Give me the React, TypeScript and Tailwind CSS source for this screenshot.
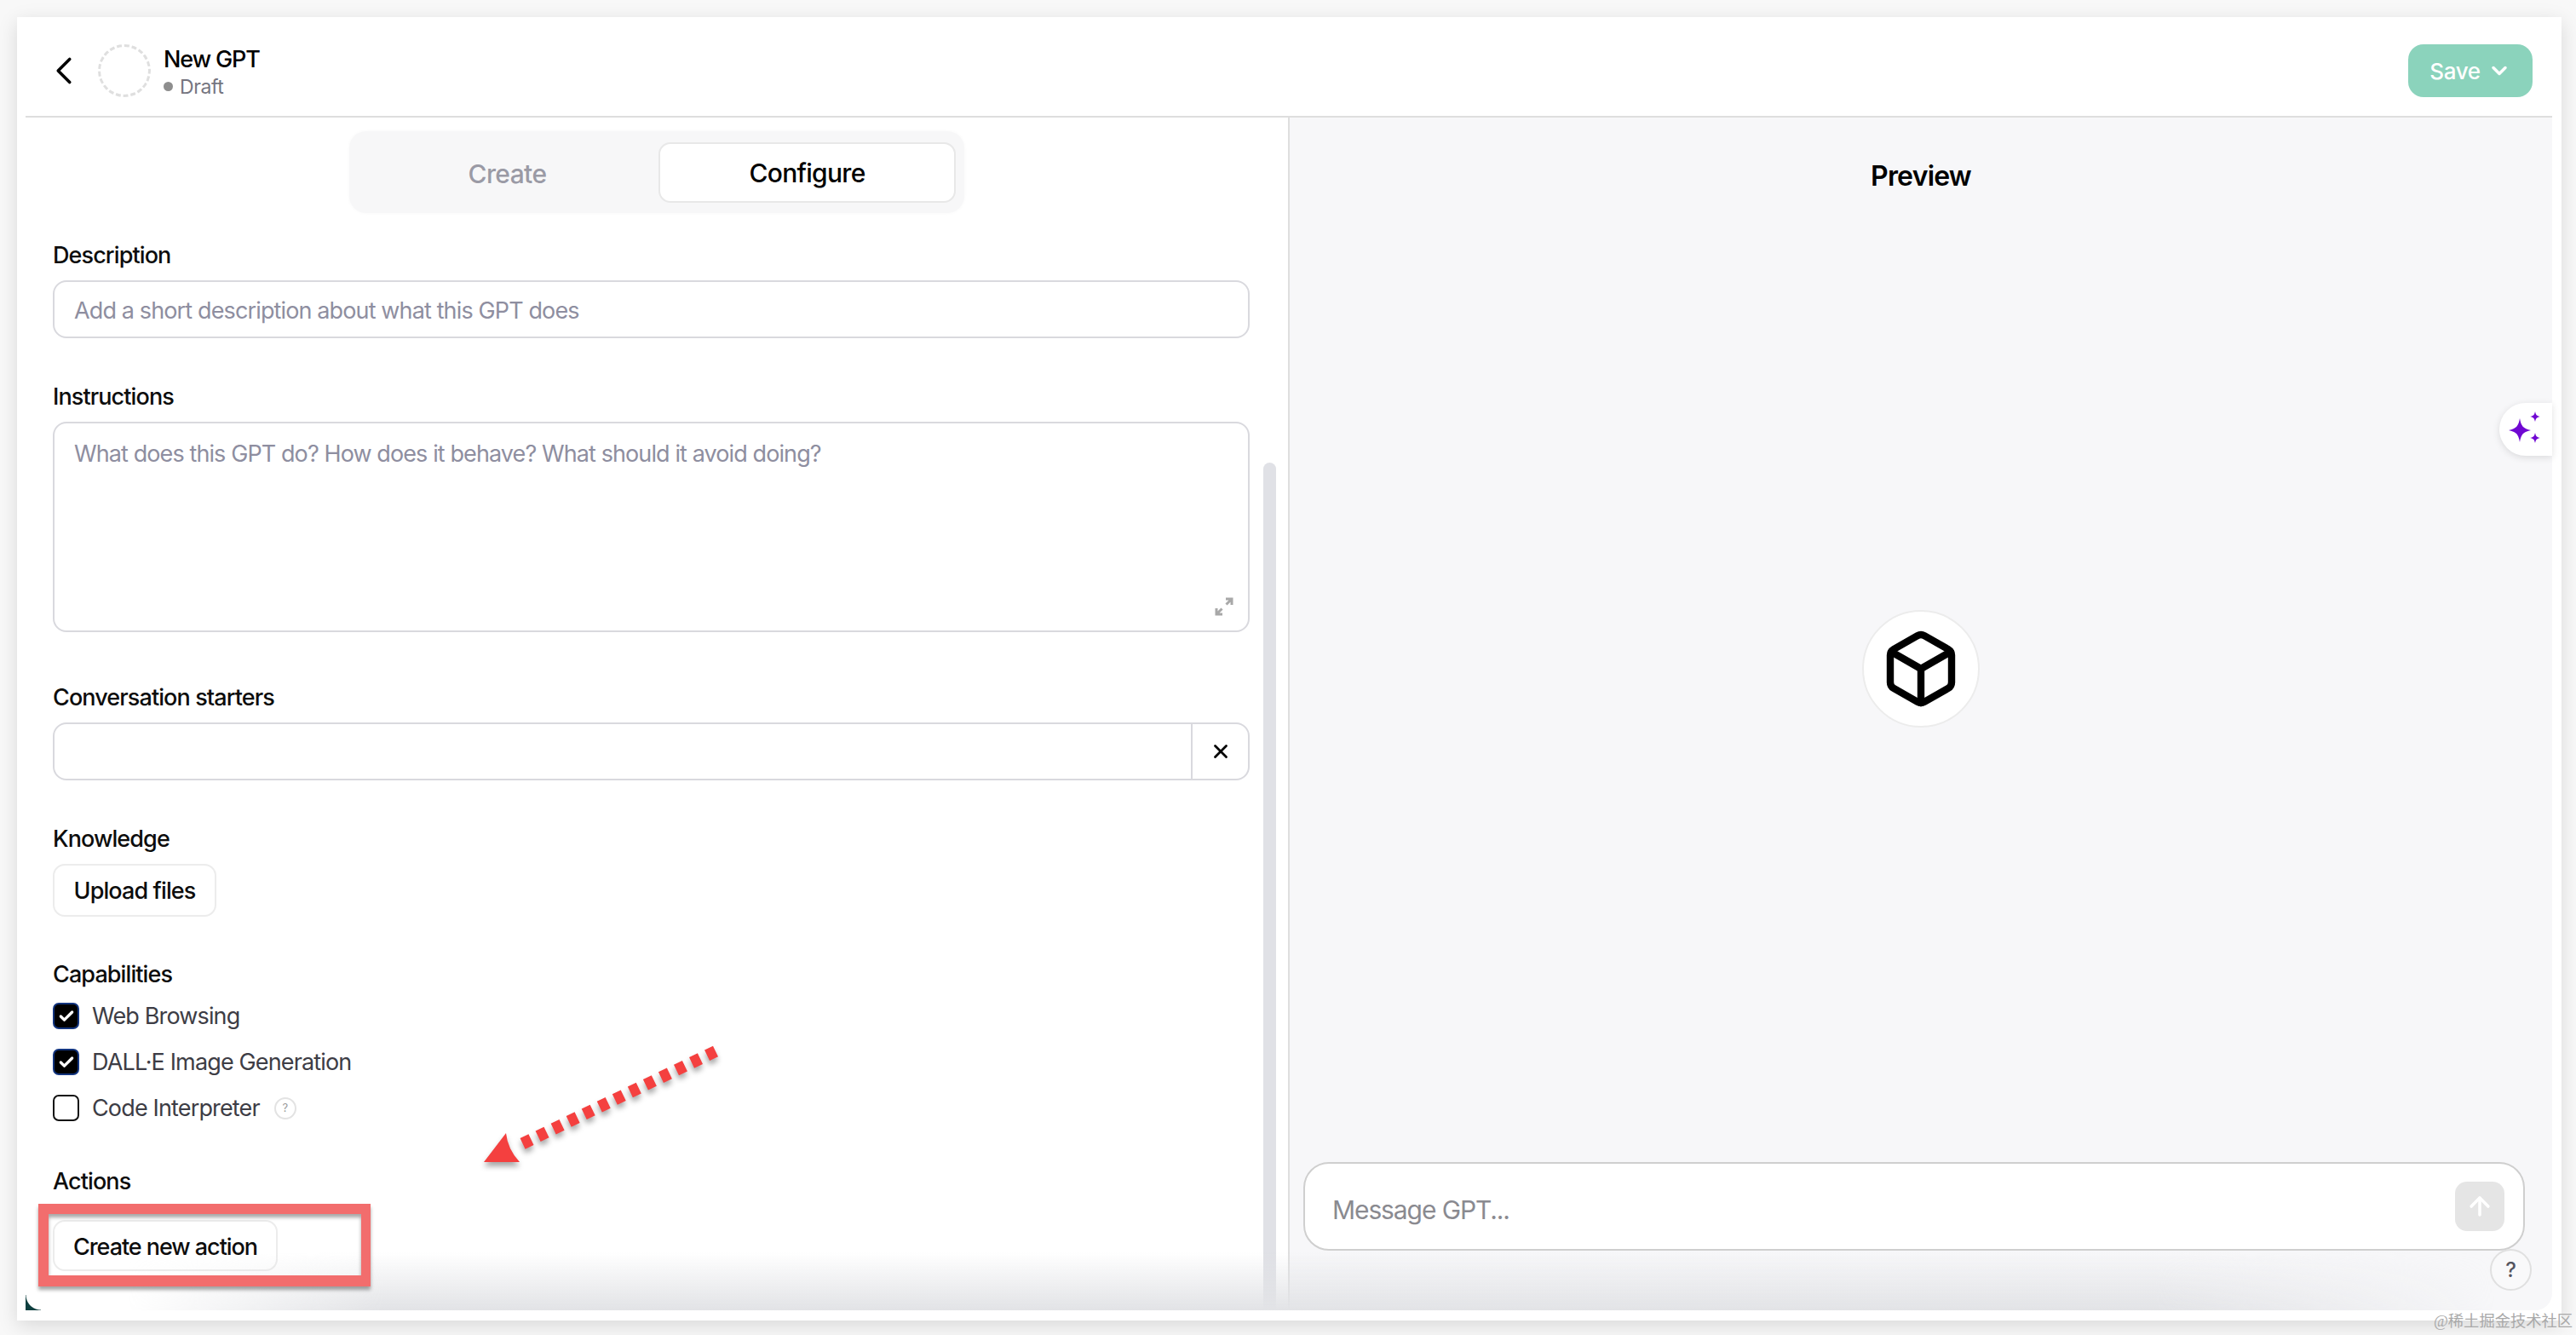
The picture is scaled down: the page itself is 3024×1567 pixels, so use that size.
import { ArrowUp, Box, Check, ChevronDown, ChevronLeft, X } from "lucide-react"

const font = "font-['Inter','Noto_Sans',sans-serif]"

function Label({ children, className = "" }: { children: React.ReactNode; className?: string }) {
  return (
    <div className={`h-[36px] pt-[1px] text-[27px] leading-[36px] font-medium tracking-[-0.9px] text-[#0d0d0d] ${className}`}>
      {children}
    </div>
  )
}

function Sparkles() {
  return (
    <svg viewBox="0 0 44 44" className="h-[44px] w-[44px] text-[#7008d2]" fill="currentColor" aria-hidden="true">
      <path d="M15 9 C16.500 18 19 21 28 23 C19 25 16.500 28 15 37 C13.500 28 11 25 2 23 C11 21 13.500 18 15 9Z" />
      <path d="M33 1 C33.800 5 35 6.200 39 7 C35 7.800 33.800 9 33 13 C32.200 9 31 7.800 27 7 C31 6.200 32.200 5 33 1Z" />
      <path d="M33 26 C33.800 30 35 31.200 39 32 C35 32.800 33.800 34 33 38 C32.200 34 31 32.800 27 32 C31 31.200 32.200 30 33 26Z" />
    </svg>
  )
}

function ExpandIcon() {
  return (
    <svg viewBox="0 0 22 22" className="h-[22px] w-[22px] text-[#a8a8a8]" fill="none" stroke="currentColor" strokeWidth="3" aria-hidden="true">
      <path d="M13 2h7v7M20 2l-6.500 6.500M2 13v7h7M2 20l6.500-6.500" />
    </svg>
  )
}

function Capability({ label, checked, help }: { label: string; checked?: boolean; help?: boolean }) {
  return (
    <div className="flex h-[31px] items-center">
      {checked ? (
        <span className="flex h-[31px] w-[31px] items-center justify-center rounded-[7px] border-2 border-[#12347e] bg-black text-white">
          <Check size={20} strokeWidth={4} />
        </span>
      ) : (
        <span className="h-[31px] w-[31px] rounded-[7px] border-2 border-[#111] bg-white" />
      )}
      <span className="ml-[15px] pt-[1px] text-[27px] tracking-[-0.85px] text-[#3d3d45]">{label}</span>
      {help && (
        <span className="ml-[17px] flex h-[26px] w-[26px] items-center justify-center rounded-full border-2 border-[#e3e3e3] text-[13px] text-[#9a9a9a]">
          ?
        </span>
      )}
    </div>
  )
}

export default function App() {
  return (
    <div className={`relative h-[1567px] w-[3024px] overflow-hidden bg-[#f8f8f8] pl-[20px] pt-[20px] ${font}`}>
      <div className="flex h-[1530px] w-[2987px] flex-col bg-white pb-[12px] pl-[10px] pr-[11px] shadow-[0_6px_22px_rgba(0,0,0,0.13)]">
        {/* Header */}
        <header className="flex h-[118px] shrink-0 items-center border-b-2 border-[#dedede] pt-[10px]">
          <ChevronLeft size={54} strokeWidth={1.600} className="ml-[18px] text-black" />
          <div className="ml-[13px] h-[62px] w-[62px] rounded-full border-[3px] border-dashed border-[#dfdfdf]" />
          <div className="ml-[15px] pt-[3px]">
            <div className="text-[27px] leading-[34px] font-medium tracking-[-1.1px] text-black">New GPT</div>
            <div className="flex items-center text-[23px] leading-[30px] tracking-[-0.4px] text-[#75757f]">
              <span className="mr-[8px] h-[11px] w-[11px] rounded-full bg-[#8e8e8e]" />
              Draft
            </div>
          </div>
          <button className="ml-auto mr-[23px] flex h-[62px] w-[146px] items-center justify-center gap-[8px] rounded-[18px] bg-[#8bd3bc] text-[26px] font-medium tracking-[-0.4px] text-white">
            Save
            <ChevronDown size={28} strokeWidth={3} />
          </button>
        </header>

        <div className="flex min-h-0 flex-1">
          {/* Left: configure form */}
          <div className="flex w-[1484px] shrink-0 border-r-2 border-[#dedede] pl-[32px]">
            <div className="w-[1405px] shrink-0 pt-[16px]">
              <div className="ml-[348px] flex h-[96px] w-[722px] rounded-[20px] bg-[#f7f7f8] pb-[12px] pl-[8px] pr-[10px] pt-[13px] shadow-[0_0_4px_rgba(0,0,0,0.03)]">
                <div className="flex flex-1 items-center justify-center pt-[3px] text-[30px] font-medium tracking-[-0.6px] text-[#9a9aa5]">Create</div>
                <div className="flex w-[349px] items-center justify-center rounded-[14px] border-2 border-[#e8e8e8] bg-white pt-[2px] text-[30px] font-medium tracking-[-0.7px] text-black">Configure</div>
              </div>

              <Label className="mt-[31px]">Description</Label>
              <div className="mt-[12px] flex h-[68px] items-center rounded-[16px] border-2 border-[#d9d9de] px-[23px] pt-[4px] text-[27px] tracking-[-0.87px] text-[#8e8ea0]">
                Add a short description about what this GPT does
              </div>

              <Label className="mt-[50px]">Instructions</Label>
              <div className="relative mt-[12px] h-[247px] rounded-[16px] border-2 border-[#d9d9de] px-[23px] py-[18px] text-[27px] leading-[36px] tracking-[-0.9px] text-[#8e8ea0]">
                What does this GPT do? How does it behave? What should it avoid doing?
                <div className="absolute bottom-[17px] right-[17px]">
                  <ExpandIcon />
                </div>
              </div>

              <Label className="mt-[58px]">Conversation starters</Label>
              <div className="mt-[12px] flex h-[68px] rounded-[16px] border-2 border-[#d9d9de]">
                <div className="flex-1 border-r-2 border-[#d9d9de]" />
                <div className="flex w-[65px] items-center justify-center text-black">
                  <X size={26} strokeWidth={2.600} />
                </div>
              </div>

              <Label className="mt-[50px]">Knowledge</Label>
              <button className="mt-[12px] flex h-[62px] w-[192px] items-center justify-center rounded-[14px] border-2 border-[#ececec] pt-[3px] text-[27px] font-medium tracking-[-0.9px] text-[#0d0d0d]">
                Upload files
              </button>

              <Label className="mt-[49px]">Capabilities</Label>
              <div className="mt-[16px] flex flex-col gap-[23px]">
                <Capability label="Web Browsing" checked />
                <Capability label="DALL·E Image Generation" checked />
                <Capability label="Code Interpreter" help />
              </div>

              <Label className="mt-[52px]">Actions</Label>
              <button className="mt-[28px] flex h-[60px] w-[264px] items-center justify-center rounded-[14px] border-2 border-[#ececec] pt-[4px] text-[27px] font-medium tracking-[-1.05px] text-[#0d0d0d]">
                Create new action
              </button>
            </div>
            <div className="ml-[16px] mt-[405px] w-[15px] rounded-t-full bg-[#e0e1e6]" />
          </div>

          {/* Right: preview */}
          <div className="relative flex flex-1 flex-col rounded-br-[20px] bg-[#f7f7f9] pb-[70px]">
            <div className="pt-[50px] text-center text-[32px] leading-[38px] font-semibold tracking-[-0.8px] text-black">Preview</div>
            <div className="flex flex-1 items-center justify-center pb-[20px]">
              <div className="flex h-[138px] w-[138px] items-center justify-center rounded-full border-2 border-[#ececec] bg-white text-black">
                <Box size={96} strokeWidth={2.100} />
              </div>
            </div>
            <div className="ml-[16px] mr-[32px] flex h-[104px] items-center rounded-[30px] border-2 border-[#cfcfcf] bg-white pl-[32px] pr-[22px]">
              <span className="pt-[8px] text-[30px] tracking-[-1.1px] text-[#8a8a90]">Message GPT...</span>
              <span className="ml-auto flex h-[58px] w-[58px] items-center justify-center rounded-[14px] bg-[#e5e5e5] text-white">
                <ArrowUp size={34} strokeWidth={2.500} />
              </span>
            </div>

            <div className="absolute right-0 top-[335px] flex h-[62px] w-[62px] items-center justify-center rounded-l-full bg-white shadow-[0_2px_8px_rgba(0,0,0,0.12)]">
              <Sparkles />
            </div>
            <div className="absolute bottom-[23px] right-[24px] z-10 flex h-[49px] w-[49px] items-center justify-center rounded-full border-2 border-[#e0e0e0] bg-[#f9f9fa] text-[24px] font-medium text-[#55555f]">
              ?
            </div>
          </div>
        </div>
      </div>

      {/* Fade along the bottom of the window */}
      <div className="absolute left-[30px] top-[1470px] h-[68px] w-[2966px] rounded-br-[20px] bg-linear-to-t from-[#e2e3e6] to-transparent [mask-image:linear-gradient(90deg,transparent_120px,black_420px,black_2500px,transparent_2900px)]" />
      <div className="absolute left-[30px] top-[1520px] h-[18px] w-[18px] bg-[radial-gradient(circle_at_100%_0,transparent_17px,#0f3f3f_18px)]" />

      {/* Annotation: box around the button */}
      <div className="absolute left-[45px] top-[1413px] h-[97px] w-[390px] border-b-[13px] border-l-[12px] border-r-[11px] border-t-[12px] border-[#f26d6d] shadow-[0_4px_4px_rgba(0,0,0,0.35),inset_0_4px_4px_rgba(0,0,0,0.35)]" />

      {/* Annotation: dashed arrow */}
      <svg className="absolute left-[552px] top-[1217px] h-[165px] w-[310px] drop-shadow-[0_5px_3px_rgba(0,0,0,0.35)]" viewBox="0 0 310 165" aria-hidden="true">
        <line x1="288" y1="17" x2="56" y2="128" stroke="#f4403f" strokeWidth="14" strokeDasharray="11 9" />
        <path d="M16 147 L42 113 Q44 132 58 147Z" fill="#f4403f" />
      </svg>

      <div className="absolute left-[2857px] top-[1539px] font-['Liberation_Serif','Noto_Sans_CJK_SC',serif] text-[18.300px] leading-[24px] text-[#a9a9a9]">
        @稀土掘金技术社区
      </div>
    </div>
  )
}
